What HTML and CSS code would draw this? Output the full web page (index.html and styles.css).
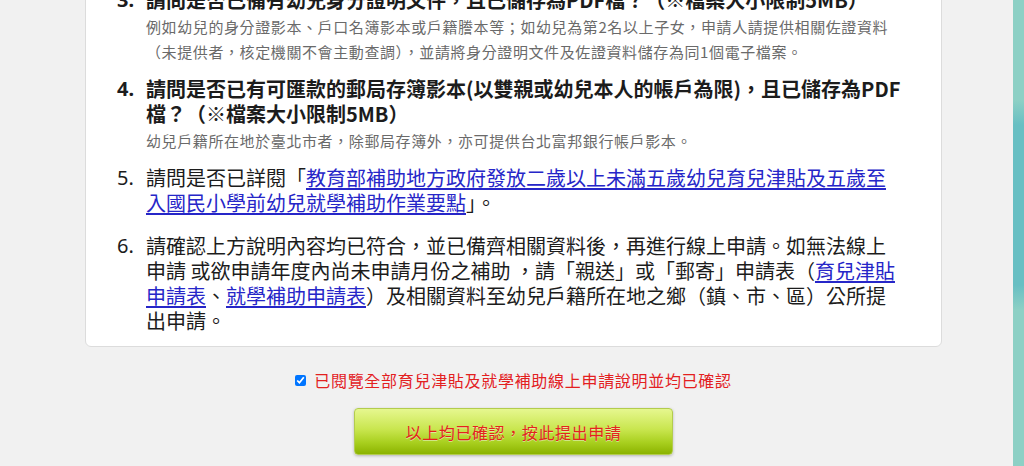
FILE: index.html
```html
<!DOCTYPE html>
<html lang="zh-TW">
<head>
<meta charset="utf-8">
<title>線上申請說明</title>
<link rel="stylesheet" href="styles.css">
</head>
<body>
<div class="main">
  <div class="card">
    <div class="item item-first">
      <span class="num bold">3.</span>
      <div class="body">
        <div class="q bold">請問是否已備有幼兒身分證明文件，且已儲存為PDF檔？（※檔案大小限制5MB）</div>
        <div class="note">例如幼兒的身分證影本、戶口名簿影本或戶籍謄本等；如幼兒為第2名以上子女，申請人請提供相關佐證資料（未提供者，核定機關不會主動查調），並請將身分證明文件及佐證資料儲存為同1個電子檔案。</div>
      </div>
    </div>
    <div class="item">
      <span class="num bold">4.</span>
      <div class="body">
        <div class="q bold">請問是否已有可匯款的郵局存簿影本(以雙親或幼兒本人的帳戶為限)，且已儲存為PDF檔？（※檔案大小限制5MB）</div>
        <div class="note">幼兒戶籍所在地於臺北市者，除郵局存簿外，亦可提供台北富邦銀行帳戶影本。</div>
      </div>
    </div>
    <div class="item">
      <span class="num">5.</span>
      <div class="body">
        <div class="q">請問是否已詳閱「<a href="#">教育部補助地方政府發放二歲以上未滿五歲幼兒育兒津貼及五歲至入國民小學前幼兒就學補助作業要點</a>」。</div>
      </div>
    </div>
    <div class="item item-last">
      <span class="num">6.</span>
      <div class="body">
        <div class="q">請確認上方說明內容均已符合，並已備齊相關資料後，再進行線上申請。如無法線上申請 或欲申請年度內尚未申請月份之補助 ，請「親送」或「郵寄」申請表（<a href="#">育兒津貼申請表</a>、<a href="#">就學補助申請表</a>）及相關資料至幼兒戶籍所在地之鄉（鎮、市、區）公所提出申請。</div>
      </div>
    </div>
  </div>
  <label class="confirm"><input type="checkbox" checked><span>已閱覽全部育兒津貼及就學補助線上申請說明並均已確認</span></label>
  <div class="actions">
    <button type="button" class="submit">以上均已確認，按此提出申請</button>
  </div>
</div>
</body>
</html>
```

FILE: styles.css
```css
html, body {
  margin: 0;
  padding: 0;
  height: 100%;
  overflow: hidden;
}
body {
  font-family: "Noto Sans CJK TC", "Noto Sans", sans-serif;
  color: #1c1c1c;
  background:
    linear-gradient(to bottom, rgba(100,190,195,0) 100px, #68bfc3 125px, #68bfc3 285px, rgba(100,190,195,0) 310px) right top / 11px 100% no-repeat,
    linear-gradient(to right, #f1f1f1 1013px, #8dd0c5 1013px);
}
.main {
  width: 857px;
  margin-left: 85px;
}
.card {
  margin-top: -30px;
  background: #fff;
  border: 1px solid #dcdcdc;
  border-radius: 6px;
  padding: 16px 39px 13px 31px;
}
.item {
  display: flex;
  margin-top: 12px;
}
.item-first {
  margin-top: 0;
}
.item-last {
  margin-top: 18px;
}
.num {
  flex: 0 0 29px;
  font-family: "Noto Sans", sans-serif;
  font-size: 20px;
  line-height: 25px;
}
.body {
  flex: 1;
  min-width: 0;
}
.q {
  font-size: 20px;
  line-height: 25px;
}
.bold {
  font-weight: 700;
}
.q a {
  color: #2626c8;
  text-decoration: underline;
  text-underline-offset: 2px;
}
.note {
  margin-top: 2px;
  font-size: 15px;
  letter-spacing: 0.6px;
  line-height: 25px;
  color: #6a6a6a;
}
.confirm {
  margin-top: 21px;
  display: flex;
  justify-content: center;
  align-items: center;
  line-height: 24px;
  font-size: 16px;
  letter-spacing: 0.7px;
  color: #e3201f;
}
.confirm input {
  width: 11px;
  height: 11px;
  margin: 0 8px 0 0;
}
.actions {
  margin-top: 16px;
  display: flex;
  justify-content: center;
}
.submit {
  width: 319px;
  height: 47px;
  border: 1px solid #b3cc4e;
  border-radius: 4px;
  background: linear-gradient(to bottom, #e6f78f 0%, #c9e64f 45%, #a8cf1e 75%, #8bb300 100%);
  box-shadow: 0 1px 3px rgba(0,0,0,0.25);
  font-family: "Noto Sans CJK TC", "Noto Sans", sans-serif;
  font-size: 16px;
  letter-spacing: 0.6px;
  color: #e4231c;
  text-shadow: 0 1px 0 rgba(255,255,255,0.45);
  padding: 0;
  cursor: pointer;
}
```
